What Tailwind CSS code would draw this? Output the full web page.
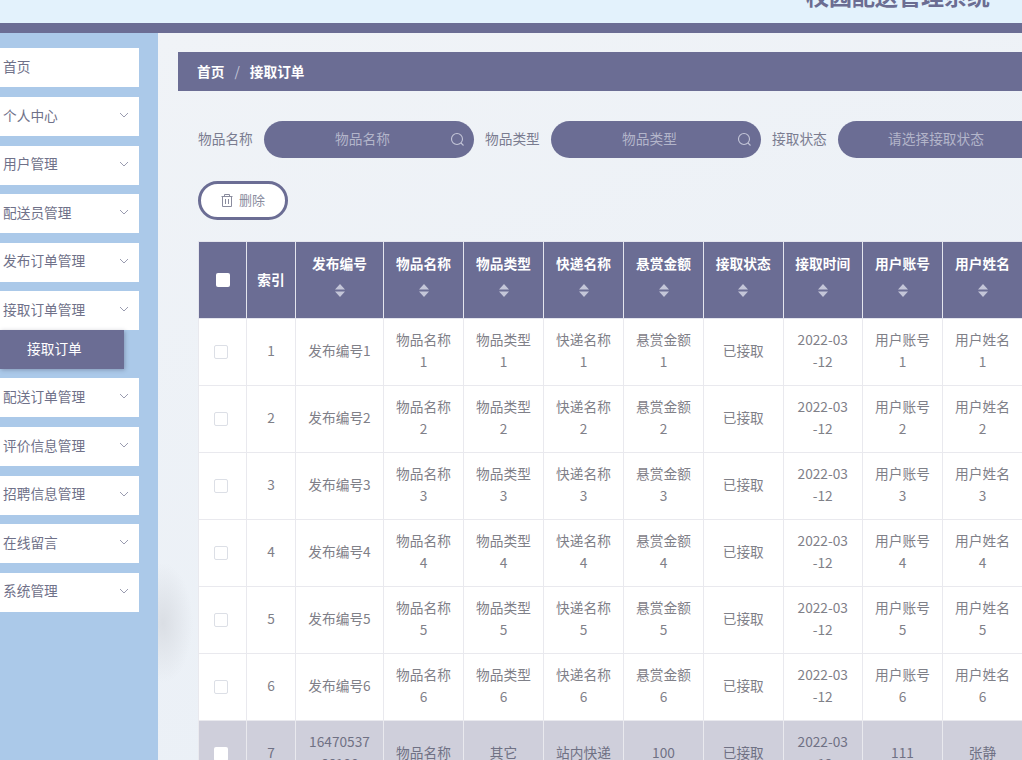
<!DOCTYPE html>
<html lang="zh-CN">
  <head>
    <meta charset="UTF-8" />
    <title>校园配送管理系统</title>
    <script src="https://cdn.jsdelivr.net/npm/@tailwindcss/browser@4"></script>
  </head>
  <body class="overflow-hidden">
    <div class="w-[1022px] h-[760px] overflow-hidden flex flex-col font-['Noto_Sans_CJK_SC','Noto_Sans',sans-serif] text-[13.7px]">
      <!-- header, title is cut by the top edge -->
      <header class="h-[23px] shrink-0 bg-[#e3f2fc] flex justify-end items-end overflow-hidden pr-[32px] pb-[13px]">
        <span class="text-[23px] leading-[30px] font-bold text-[#6b6d92] whitespace-nowrap">校园配送管理系统</span>
      </header>
      <div class="h-[10px] shrink-0 bg-[#6b6d94]"></div>

      <div class="flex flex-1 min-h-0">
        <!-- sidebar -->
        <aside class="w-[158px] shrink-0 bg-[#abc9e9] pt-[15.4px] text-[#6f7189] [&>div]:pb-[3px]">
          <div class="w-[139px] h-[39px] mb-[9.6px] bg-white flex items-center pl-[3px]">首页</div>
          <div class="w-[139px] h-[39px] mb-[9.6px] bg-white flex items-center justify-between pl-[3px] pr-[10px]">个人中心<svg class="w-[10px] h-[10px]" viewBox="0 0 10 10" fill="none" stroke="#9a9cb0"><path d="M1 3l4 4 4-4" /></svg></div>
          <div class="w-[139px] h-[39px] mb-[9.6px] bg-white flex items-center justify-between pl-[3px] pr-[10px]">用户管理<svg class="w-[10px] h-[10px]" viewBox="0 0 10 10" fill="none" stroke="#9a9cb0"><path d="M1 3l4 4 4-4" /></svg></div>
          <div class="w-[139px] h-[39px] mb-[9.6px] bg-white flex items-center justify-between pl-[3px] pr-[10px]">配送员管理<svg class="w-[10px] h-[10px]" viewBox="0 0 10 10" fill="none" stroke="#9a9cb0"><path d="M1 3l4 4 4-4" /></svg></div>
          <div class="w-[139px] h-[39px] mb-[9.6px] bg-white flex items-center justify-between pl-[3px] pr-[10px]">发布订单管理<svg class="w-[10px] h-[10px]" viewBox="0 0 10 10" fill="none" stroke="#9a9cb0"><path d="M1 3l4 4 4-4" /></svg></div>
          <div class="w-[139px] h-[39px] bg-white flex items-center justify-between pl-[3px] pr-[10px]">接取订单管理<svg class="w-[10px] h-[10px]" viewBox="0 0 10 10" fill="none" stroke="#9a9cb0"><path d="M1 3l4 4 4-4" /></svg></div>
          <div class="w-[124px] h-[39px] mb-[9px] bg-[#6b6d94] text-white flex items-center pl-[27px] shadow-[1px_1px_4px_rgba(60,60,90,0.35)]">接取订单</div>
          <div class="w-[139px] h-[39px] mb-[9.6px] bg-white flex items-center justify-between pl-[3px] pr-[10px]">配送订单管理<svg class="w-[10px] h-[10px]" viewBox="0 0 10 10" fill="none" stroke="#9a9cb0"><path d="M1 3l4 4 4-4" /></svg></div>
          <div class="w-[139px] h-[39px] mb-[9.6px] bg-white flex items-center justify-between pl-[3px] pr-[10px]">评价信息管理<svg class="w-[10px] h-[10px]" viewBox="0 0 10 10" fill="none" stroke="#9a9cb0"><path d="M1 3l4 4 4-4" /></svg></div>
          <div class="w-[139px] h-[39px] mb-[9.6px] bg-white flex items-center justify-between pl-[3px] pr-[10px]">招聘信息管理<svg class="w-[10px] h-[10px]" viewBox="0 0 10 10" fill="none" stroke="#9a9cb0"><path d="M1 3l4 4 4-4" /></svg></div>
          <div class="w-[139px] h-[39px] mb-[9.6px] bg-white flex items-center justify-between pl-[3px] pr-[10px]">在线留言<svg class="w-[10px] h-[10px]" viewBox="0 0 10 10" fill="none" stroke="#9a9cb0"><path d="M1 3l4 4 4-4" /></svg></div>
          <div class="w-[139px] h-[39px] bg-white flex items-center justify-between pl-[3px] pr-[10px]">系统管理<svg class="w-[10px] h-[10px]" viewBox="0 0 10 10" fill="none" stroke="#9a9cb0"><path d="M1 3l4 4 4-4" /></svg></div>
        </aside>

        <!-- main -->
        <main class="flex-1 min-w-0 overflow-hidden pl-[20px] pt-[19px] bg-[radial-gradient(ellipse_30px_60px_at_5px_590px,#dadee4,transparent),linear-gradient(160deg,#f0f3f7,#e9eff6)]">
          <div class="h-[39px] bg-[#6b6d94] flex items-center pl-[19px] pb-[1px] text-white font-bold">
            首页<span class="mx-[10px] font-normal text-[#c3c5d8]">/</span>接取订单
          </div>

          <!-- search -->
          <div class="mt-[30px] pl-[20px] flex items-center w-[900px] text-[#7a7c90]">
            <span class="w-[55px] shrink-0 whitespace-nowrap pb-[2px]">物品名称</span>
            <div class="ml-[11px] w-[210px] h-[37px] shrink-0 rounded-full bg-[#6b6d94] flex items-center pl-[15px] pr-[9px] text-[#b3b5ca]">
              <span class="flex-1 text-center pl-[3px] pr-[7px] pb-[2px]">物品名称</span>
              <svg class="w-[15px] h-[15px]" viewBox="0 0 15 15" fill="none" stroke="#c4c6d8" stroke-width="1.1"><circle cx="7" cy="7" r="5.5" /><path d="M11 11l2.5 2.5" /></svg>
            </div>
            <span class="ml-[11px] w-[55px] shrink-0 whitespace-nowrap pb-[2px]">物品类型</span>
            <div class="ml-[11px] w-[210px] h-[37px] shrink-0 rounded-full bg-[#6b6d94] flex items-center pl-[15px] pr-[9px] text-[#b3b5ca]">
              <span class="flex-1 text-center pl-[3px] pr-[7px] pb-[2px]">物品类型</span>
              <svg class="w-[15px] h-[15px]" viewBox="0 0 15 15" fill="none" stroke="#c4c6d8" stroke-width="1.1"><circle cx="7" cy="7" r="5.5" /><path d="M11 11l2.5 2.5" /></svg>
            </div>
            <span class="ml-[11px] w-[55px] shrink-0 whitespace-nowrap pb-[2px]">接取状态</span>
            <div class="ml-[11px] w-[210px] h-[37px] shrink-0 rounded-full bg-[#6b6d94] flex items-center pl-[16px] pr-[30px] text-[#b3b5ca]">
              <span class="flex-1 text-center whitespace-nowrap pb-[2px]">请选择接取状态</span>
            </div>
          </div>

          <!-- delete button -->
          <div class="mt-[23px] pl-[20px]">
            <button class="w-[90px] h-[39px] rounded-full border-[3px] border-[#6b6d94] bg-white text-[#8a8c9e] text-[13px] flex items-center justify-center gap-[6px]">
              <svg class="w-[12px] h-[13px]" viewBox="0 0 12 13" fill="none" stroke="#8a8c9e"><path d="M0.5 2.5h11M3.5 2.5v-2h5v2M1.5 2.5v10h9v-10M4.5 5v5M7.5 5v5" /></svg>
              <span class="pb-[2px]">删除</span>
            </button>
          </div>

          <!-- table -->
          <div class="mt-[21px] pl-[20px] w-[900px]">
            <table class="table-fixed w-[824px] border-collapse text-center text-[#7f8088] [&_td]:border [&_td]:border-[#e9e9ee] [&_td]:px-[10px] [&_td]:pb-[4px] [&_td]:leading-[22px] [&_td]:break-all [&_th]:border [&_th]:border-[#e4e5ee] [&_th]:px-[8px] [&_th]:leading-[22px] [&_th]:font-bold [&_th]:text-white [&_th]:bg-[#6b6d94]">
              <colgroup>
                <col class="w-[48px]" />
                <col class="w-[49px]" />
                <col class="w-[88px]" />
                <col class="w-[80px]" />
                <col class="w-[80px]" />
                <col class="w-[80px]" />
                <col class="w-[80px]" />
                <col class="w-[79.5px]" />
                <col class="w-[79.5px]" />
                <col class="w-[80px]" />
                <col class="w-[80px]" />
              </colgroup>
              <thead>
                <tr class="h-[77px]">
                  <th><span class="block w-[14px] h-[14px] mx-auto bg-white rounded-[2px]"></span></th>
                  <th class="pb-[2px]">索引</th>
                  <th class="pb-[12px]">发布编号<svg class="block mx-auto mt-[10px] w-[10px] h-[13px]" viewBox="0 0 10 13" fill="#c4c6d8"><path d="M5 0l5 5.5H0zM5 13l5-5.5H0z" /></svg></th>
                  <th class="pb-[12px]">物品名称<svg class="block mx-auto mt-[10px] w-[10px] h-[13px]" viewBox="0 0 10 13" fill="#c4c6d8"><path d="M5 0l5 5.5H0zM5 13l5-5.5H0z" /></svg></th>
                  <th class="pb-[12px]">物品类型<svg class="block mx-auto mt-[10px] w-[10px] h-[13px]" viewBox="0 0 10 13" fill="#c4c6d8"><path d="M5 0l5 5.5H0zM5 13l5-5.5H0z" /></svg></th>
                  <th class="pb-[12px]">快递名称<svg class="block mx-auto mt-[10px] w-[10px] h-[13px]" viewBox="0 0 10 13" fill="#c4c6d8"><path d="M5 0l5 5.5H0zM5 13l5-5.5H0z" /></svg></th>
                  <th class="pb-[12px]">悬赏金额<svg class="block mx-auto mt-[10px] w-[10px] h-[13px]" viewBox="0 0 10 13" fill="#c4c6d8"><path d="M5 0l5 5.5H0zM5 13l5-5.5H0z" /></svg></th>
                  <th class="pb-[12px]">接取状态<svg class="block mx-auto mt-[10px] w-[10px] h-[13px]" viewBox="0 0 10 13" fill="#c4c6d8"><path d="M5 0l5 5.5H0zM5 13l5-5.5H0z" /></svg></th>
                  <th class="pb-[12px]">接取时间<svg class="block mx-auto mt-[10px] w-[10px] h-[13px]" viewBox="0 0 10 13" fill="#c4c6d8"><path d="M5 0l5 5.5H0zM5 13l5-5.5H0z" /></svg></th>
                  <th class="pb-[12px]">用户账号<svg class="block mx-auto mt-[10px] w-[10px] h-[13px]" viewBox="0 0 10 13" fill="#c4c6d8"><path d="M5 0l5 5.5H0zM5 13l5-5.5H0z" /></svg></th>
                  <th class="pb-[12px]">用户姓名<svg class="block mx-auto mt-[10px] w-[10px] h-[13px]" viewBox="0 0 10 13" fill="#c4c6d8"><path d="M5 0l5 5.5H0zM5 13l5-5.5H0z" /></svg></th>
                </tr>
              </thead>
              <tbody class="bg-white">
                <tr class="h-[67px]">
                  <td class="!pb-0"><span class="block w-[14px] h-[14px] ml-[5px] border border-[#dcdfe6] rounded-[2px]"></span></td>
                  <td>1</td><td class="whitespace-nowrap">发布编号1</td><td>物品名称1</td><td>物品类型1</td><td>快递名称1</td><td>悬赏金额1</td><td>已接取</td><td class="!px-[12px]">2022-03-12</td><td>用户账号1</td><td>用户姓名1</td>
                </tr>
                <tr class="h-[67px]">
                  <td class="!pb-0"><span class="block w-[14px] h-[14px] ml-[5px] border border-[#dcdfe6] rounded-[2px]"></span></td>
                  <td>2</td><td class="whitespace-nowrap">发布编号2</td><td>物品名称2</td><td>物品类型2</td><td>快递名称2</td><td>悬赏金额2</td><td>已接取</td><td class="!px-[12px]">2022-03-12</td><td>用户账号2</td><td>用户姓名2</td>
                </tr>
                <tr class="h-[67px]">
                  <td class="!pb-0"><span class="block w-[14px] h-[14px] ml-[5px] border border-[#dcdfe6] rounded-[2px]"></span></td>
                  <td>3</td><td class="whitespace-nowrap">发布编号3</td><td>物品名称3</td><td>物品类型3</td><td>快递名称3</td><td>悬赏金额3</td><td>已接取</td><td class="!px-[12px]">2022-03-12</td><td>用户账号3</td><td>用户姓名3</td>
                </tr>
                <tr class="h-[67px]">
                  <td class="!pb-0"><span class="block w-[14px] h-[14px] ml-[5px] border border-[#dcdfe6] rounded-[2px]"></span></td>
                  <td>4</td><td class="whitespace-nowrap">发布编号4</td><td>物品名称4</td><td>物品类型4</td><td>快递名称4</td><td>悬赏金额4</td><td>已接取</td><td class="!px-[12px]">2022-03-12</td><td>用户账号4</td><td>用户姓名4</td>
                </tr>
                <tr class="h-[67px]">
                  <td class="!pb-0"><span class="block w-[14px] h-[14px] ml-[5px] border border-[#dcdfe6] rounded-[2px]"></span></td>
                  <td>5</td><td class="whitespace-nowrap">发布编号5</td><td>物品名称5</td><td>物品类型5</td><td>快递名称5</td><td>悬赏金额5</td><td>已接取</td><td class="!px-[12px]">2022-03-12</td><td>用户账号5</td><td>用户姓名5</td>
                </tr>
                <tr class="h-[67px]">
                  <td class="!pb-0"><span class="block w-[14px] h-[14px] ml-[5px] border border-[#dcdfe6] rounded-[2px]"></span></td>
                  <td>6</td><td class="whitespace-nowrap">发布编号6</td><td>物品名称6</td><td>物品类型6</td><td>快递名称6</td><td>悬赏金额6</td><td>已接取</td><td class="!px-[12px]">2022-03-12</td><td>用户账号6</td><td>用户姓名6</td>
                </tr>
                <tr class="h-[67px] bg-[#cfcfdb] text-[#6f7184]">
                  <td class="!pb-0"><span class="block w-[14px] h-[14px] ml-[5px] bg-white rounded-[2px]"></span></td>
                  <td>7</td><td>1647053766188</td><td>物品名称</td><td>其它</td><td>站内快递</td><td>100</td><td>已接取</td><td class="!px-[12px]">2022-03-12</td><td>111</td><td>张静</td>
                </tr>
              </tbody>
            </table>
          </div>
        </main>
      </div>
    </div>
  </body>
</html>
